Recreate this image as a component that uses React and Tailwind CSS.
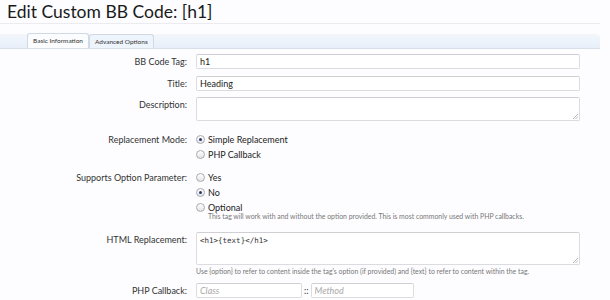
import React from "react";

function Radio({ checked, label }) {
  return (
    <div className="flex items-center gap-[3px] h-[15px]">
      <span className="w-[9px] h-[9px] rounded-full border border-[#a9a9b0] bg-gradient-to-b from-[#ffffff] to-[#e4e4e8] flex items-center justify-center">
        {checked && <span className="w-[3px] h-[3px] rounded-full bg-[#2a3a6a]" />}
      </span>
      <span className="text-[9px] leading-[12px] text-[#222]">{label}</span>
    </div>
  );
}

function Row({ label, children, className = "" }) {
  return (
    <div className={"flex " + className}>
      <div className="w-[187px] shrink-0 text-right text-[9px] leading-[12px] text-[#333] pt-[2px]">{label}</div>
      <div className="ml-[9px] flex-1">{children}</div>
    </div>
  );
}

const Resize = () => (
  <svg className="absolute right-[1px] bottom-[1px]" width="5" height="5" viewBox="0 0 5 5">
    <path d="M5 0L0 5M5 2.5L2.5 5" stroke="#999" strokeWidth="0.7" />
  </svg>
);

export default function App() {
  return (
    <div className="w-[610px] h-[300px] overflow-hidden bg-[#fdfdff]" style={{ fontFamily: "Lato, 'Open Sans', sans-serif" }}>
      <div className="pl-[7px] pt-[1px] h-[23px] text-[17.5px] leading-[22px] text-[#1a1a1a]">Edit Custom BB Code: [h1]</div>
      <div className="h-px bg-[#ebebf0] mr-[10px]" />
      <div className="mt-[10px] mr-[10px] h-[15px] rounded-tr-[4px] bg-gradient-to-b from-[#f3f7fc] to-[#e7eff9] border-b border-[#d7e0ea] flex items-end pl-[27px]">
        <div className="h-[15px] px-[5px] flex items-center bg-[#fbfcfe] border border-b-0 border-[#d0d9e4] rounded-t-[3px] text-[6.5px] text-[#333]">Basic Information</div>
        <div className="h-[14px] px-[5px] flex items-center bg-[#eef4fb] border border-b-0 border-[#d0d9e4] rounded-t-[3px] text-[6.5px] text-[#333]">Advanced Options</div>
      </div>

      <div className="pr-[30px]">
        <Row label="BB Code Tag:" className="mt-[5px]">
          <div className="h-[15px] bg-white border border-[#dcdce0] border-t-[#cfcfd4] rounded-[2px] px-[3px] text-[9px] leading-[13px] text-[#222]">h1</div>
        </Row>
        <Row label="Title:" className="mt-[7px]">
          <div className="h-[15px] bg-white border border-[#dcdce0] border-t-[#cfcfd4] rounded-[2px] px-[3px] text-[9px] leading-[13px] text-[#222]">Heading</div>
        </Row>
        <Row label="Description:" className="mt-[6px]">
          <div className="relative h-[24px] bg-white border border-[#dcdce0] border-t-[#cfcfd4] rounded-[2px]">
            <Resize />
          </div>
        </Row>
        <Row label="Replacement Mode:" className="mt-[11px]">
          <Radio checked label="Simple Replacement" />
          <Radio label="PHP Callback" />
        </Row>
        <Row label="Supports Option Parameter:" className="mt-[8px]">
          <Radio label="Yes" />
          <Radio checked label="No" />
          <Radio label="Optional" />
          <div className="-mt-[3px] pl-[12px] text-[6.9px] text-[#777] leading-[8px]">This tag will work with and without the option provided. This is most commonly used with PHP callbacks.</div>
        </Row>
        <Row label="HTML Replacement:" className="mt-[12px]">
          <div className="relative h-[33px] bg-white border border-[#dcdce0] border-t-[#cfcfd4] rounded-[2px] px-[3px] pt-[2px] text-[7.5px] text-[#333]" style={{ fontFamily: "'DejaVu Sans Mono', monospace" }}>
            &lt;h1&gt;{"{text}"}&lt;/h1&gt;
            <Resize />
          </div>
          <div className="mt-[2px] text-[6.9px] text-[#777] leading-[8px]">Use {"{option}"} to refer to content inside the tag's option (if provided) and {"{text}"} to refer to content within the tag.</div>
        </Row>
        <Row label="PHP Callback:" className="mt-[8px]">
          <div className="flex items-center">
            <div className="w-[106px] h-[15px] bg-white border border-[#dcdce0] border-t-[#cfcfd4] rounded-[2px] px-[3px] text-[9px] leading-[13px] italic text-[#aaa]">Class</div>
            <span className="mx-[2px] text-[9px] text-[#333]">::</span>
            <div className="w-[103px] h-[15px] bg-white border border-[#dcdce0] border-t-[#cfcfd4] rounded-[2px] px-[3px] text-[9px] leading-[13px] italic text-[#aaa]">Method</div>
          </div>
        </Row>
      </div>
    </div>
  );
}
